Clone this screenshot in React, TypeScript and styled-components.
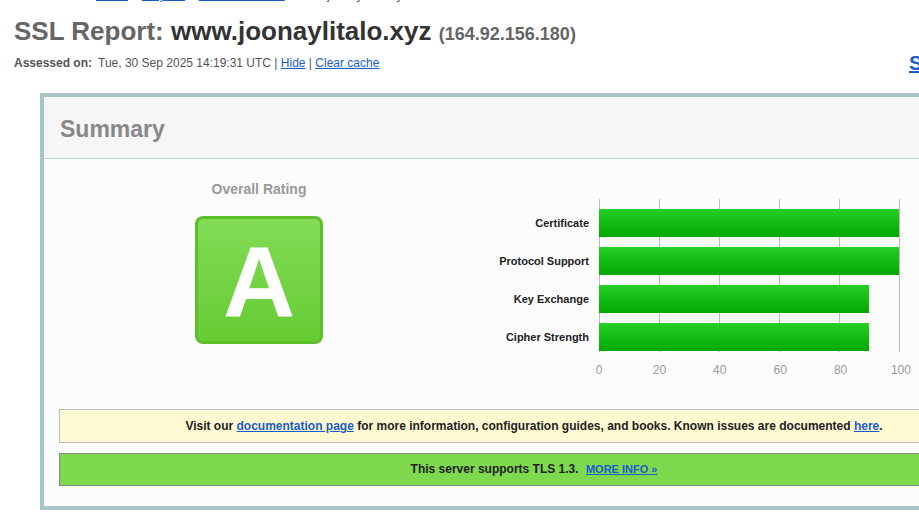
import React from "react";
import styled, { createGlobalStyle } from "styled-components";

const Global = createGlobalStyle`
  html, body { margin: 0; padding: 0; background: #ffffff; overflow: hidden; }
  body { font-family: "Liberation Sans", Arial, sans-serif; color: #333; }
  a { color: #1a5ccc; text-decoration: underline; }
`;

const Page = styled.div`
  width: 1055px;
  padding-left: 14px;
  box-sizing: border-box;
`;

const Breadcrumb = styled.div`
  margin-top: -12px;
  height: 14px;
  line-height: 14px;
  font-size: 12px;
  color: #555;
  padding-left: 4px;
  white-space: nowrap;
`;

const Lead = styled.span`
  display: inline-block;
  width: 78px;
`;

const Title = styled.h1`
  margin: 14px 0 0 0;
  font-size: 26px;
  line-height: 30px;
  font-weight: bold;
  color: #666;
  white-space: nowrap;
`;

const Domain = styled.span`
  color: #333;
`;

const Ip = styled.span`
  font-size: 18px;
  color: #666;
`;

const MetaRow = styled.div`
  display: flex;
  justify-content: space-between;
  align-items: flex-start;
  margin-top: 3px;
`;

const Assessed = styled.div`
  margin-top: 4px;
  font-size: 12px;
  line-height: 14px;
  color: #555;
  white-space: nowrap;
`;

const AssessedLabel = styled.b`
  margin-right: 6px;
`;

const ScanLink = styled.a`
  font-size: 20px;
  line-height: 23px;
  font-weight: bold;
  white-space: nowrap;
`;

const ReportBox = styled.section`
  margin: 18px 0 0 26px;
  width: 988px;
  border: 4px solid #a8c4c6;
  box-sizing: border-box;
  background: #fcfcfc;
`;

const BoxHeader = styled.div`
  height: 62px;
  box-sizing: border-box;
  padding: 3px 0 0 16px;
  background: #f6f6f6;
  border-bottom: 1px solid #c3d2d2;
  display: flex;
  align-items: center;
  font-size: 23px;
  font-weight: bold;
  color: #888;
`;

const BoxContent = styled.div`
  padding: 0 15px 20px 15px;
`;

const RatingRow = styled.div`
  display: flex;
  height: 250px;
`;

const RatingCol = styled.div`
  width: 400px;
  display: flex;
  flex-direction: column;
  align-items: center;
  padding-top: 22px;
`;

const RatingTitle = styled.div`
  font-size: 14px;
  line-height: 16px;
  font-weight: bold;
  color: #999;
`;

const Grade = styled.div`
  margin-top: 19px;
  width: 128px;
  height: 128px;
  box-sizing: border-box;
  border: 3px solid #5ebf2b;
  border-radius: 8px;
  background: linear-gradient(to bottom, #83db56, #66cc33);
  color: #fff;
  font-size: 100px;
  font-weight: bold;
  display: flex;
  align-items: center;
  justify-content: center;
  line-height: 1;
  padding-top: 4px;
`;

const ChartCol = styled.div`
  margin-top: 40px;
  display: flex;
  flex-direction: column;
`;

const ChartBody = styled.div`
  display: flex;
  gap: 10px;
`;

const Labels = styled.div`
  width: 130px;
  padding-top: 10px;
  display: flex;
  flex-direction: column;
  gap: 10px;
`;

const Label = styled.div`
  height: 28px;
  display: flex;
  align-items: center;
  justify-content: flex-end;
  font-size: 11px;
  font-weight: bold;
  color: #222;
  white-space: nowrap;
`;

const Axis = styled.div`
  margin-left: 140px;
  margin-top: 11px;
  width: 302px;
  display: flex;
  justify-content: space-between;
  font-size: 12px;
  line-height: 14px;
  color: #999;
`;

const Tick = styled.span`
  width: 0;
  display: flex;
  justify-content: center;
`;

const Notice = styled.div<{ $tone: "info" | "good" }>`
  width: 100%;
  box-sizing: border-box;
  text-align: center;
  font-weight: bold;
  color: #222;
  white-space: nowrap;
  border: 1px solid ${(p) => (p.$tone === "info" ? "#bbbbbb" : "#888888")};
  background: ${(p) => (p.$tone === "info" ? "#fff9d2" : "#7fd94f")};
  font-size: 12px;
  height: ${(p) => (p.$tone === "info" ? "34px" : "33px")};
  line-height: ${(p) => (p.$tone === "info" ? "32px" : "31px")};
  & + & { margin-top: 10px; }
`;

const MoreInfo = styled.a`
  font-size: 11px;
  margin-left: 4px;
`;

const scores = [
  { name: "Certificate", value: 100 },
  { name: "Protocol Support", value: 100 },
  { name: "Key Exchange", value: 90 },
  { name: "Cipher Strength", value: 90 },
];

const ticks = [0, 20, 40, 60, 80, 100];

function BarPlot() {
  return (
    <svg width="302" height="153" viewBox="0 0 302 153">
      <defs>
        <linearGradient id="bar" x1="0" y1="0" x2="0" y2="1">
          <stop offset="0" stopColor="#25cf25" />
          <stop offset="1" stopColor="#00a800" />
        </linearGradient>
      </defs>
      {ticks.map((t) => (
        <line key={t} x1={t * 3 + 0.5} x2={t * 3 + 0.5} y1={0} y2={153} stroke="#bbbbbb" strokeWidth={1} />
      ))}
      {scores.map((s, i) => (
        <rect key={s.name} x={0} y={10 + i * 38} width={s.value * 3} height={28} fill="url(#bar)" />
      ))}
    </svg>
  );
}

export default function App() {
  return (
    <>
      <Global />
      <Page>
        <Breadcrumb>
          <Lead>You are here:</Lead>
          <a href="#">Home</a> &gt; <a href="#">Projects</a> &gt; <a href="#">SSL Server Test</a> &gt; www.joonaylitalo.xyz
        </Breadcrumb>
        <Title>
          SSL Report: <Domain>www.joonaylitalo.xyz</Domain> <Ip>(164.92.156.180)</Ip>
        </Title>
        <MetaRow>
          <Assessed>
            <AssessedLabel>Assessed on:</AssessedLabel>
            Tue, 30 Sep 2025 14:19:31 UTC | <a href="#">Hide</a> | <a href="#">Clear cache</a>
          </Assessed>
          <ScanLink href="#">Scan Another &raquo;</ScanLink>
        </MetaRow>
        <ReportBox>
          <BoxHeader>Summary</BoxHeader>
          <BoxContent>
            <RatingRow>
              <RatingCol>
                <RatingTitle>Overall Rating</RatingTitle>
                <Grade>A</Grade>
              </RatingCol>
              <ChartCol>
                <ChartBody>
                  <Labels>
                    {scores.map((s) => (
                      <Label key={s.name}>{s.name}</Label>
                    ))}
                  </Labels>
                  <BarPlot />
                </ChartBody>
                <Axis>
                  {ticks.map((t) => (
                    <Tick key={t}>{t}</Tick>
                  ))}
                </Axis>
              </ChartCol>
            </RatingRow>
            <Notice $tone="info">
              Visit our <a href="#">documentation page</a> for more information, configuration guides, and books. Known issues are documented <a href="#">here</a>.
            </Notice>
            <Notice $tone="good">
              This server supports TLS 1.3. <MoreInfo href="#">MORE INFO &raquo;</MoreInfo>
            </Notice>
          </BoxContent>
        </ReportBox>
      </Page>
    </>
  );
}
